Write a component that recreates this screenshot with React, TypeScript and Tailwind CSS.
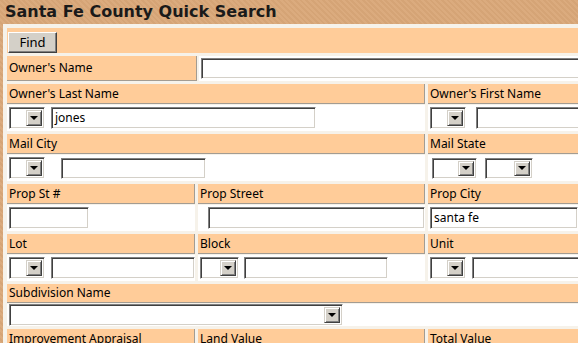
import React from "react";

const font = "font-['Noto_Sans',sans-serif]";

function Box(props: { w: number; h?: number; value?: string }) {
  return (
    <div
      className="flex items-center bg-white border border-t-[#808080] border-l-[#808080] border-r-white border-b-white shadow-[inset_1px_1px_0_#404040,inset_-1px_-1px_0_#d4d0c8] pl-[3px] text-[12px] text-black overflow-hidden"
      style={{ width: props.w, height: props.h ?? 22 }}
    >
      {props.value}
    </div>
  );
}

function Select(props: { w: number; h?: number }) {
  return (
    <div
      className="flex justify-end items-stretch bg-white border border-t-[#808080] border-l-[#808080] border-r-white border-b-white shadow-[inset_1px_1px_0_#404040,inset_-1px_-1px_0_#d4d0c8] p-[2px]"
      style={{ width: props.w, height: props.h ?? 22 }}
    >
      <div className="w-[16px] flex items-center justify-center bg-[#d4d0c8] border border-t-[#d4d0c8] border-l-[#d4d0c8] border-r-[#404040] border-b-[#404040] shadow-[inset_1px_1px_0_#fff,inset_-1px_-1px_0_#808080]">
        <div className="w-0 h-0 border-l-[4px] border-r-[4px] border-t-[4px] border-l-transparent border-r-transparent border-t-black" />
      </div>
    </div>
  );
}

function Label(props: { text: string; w?: number; h?: number }) {
  return (
    <div
      className={`bg-[#ffcc99] flex items-center pl-[2px] text-[12px] text-black border-b border-r border-b-[#a39c92] border-r-[#a39c92] ${props.w ? "" : "flex-1"}`}
      style={{ width: props.w, height: props.h ?? 20 }}
    >
      {props.text}
    </div>
  );
}

function Cell(props: { w?: number; children?: React.ReactNode; className?: string }) {
  return (
    <div
      className={`bg-white flex items-center h-[26px] pl-[2px] ${props.w ? "" : "flex-1"} ${props.className ?? "gap-[6px]"}`}
      style={{ width: props.w }}
    >
      {props.children}
    </div>
  );
}

export default function App() {
  return (
    <div
      className={`w-[578px] h-[343px] overflow-hidden bg-[#d8a87a] bg-[repeating-linear-gradient(45deg,#dbab7e_0px,#dbab7e_2px,#d5a476_2px,#d5a476_4px)] ${font}`}
    >
      <div className="h-[24px] pl-[5px] flex items-center text-[16px] font-bold text-[#1a1a1a] font-['DejaVu_Sans',sans-serif]">
        Santa Fe County Quick Search
      </div>
      <div className="ml-[3px] w-[700px] bg-[#f6f2ea] pt-[4px] pl-[4px] flex flex-col gap-[3px]">
        <div className="bg-[#ffcc99] h-[25px] pl-[1px] pt-[1px]">
          <button className="w-[49px] h-[21px] bg-[#d4d0c8] border border-t-white border-l-white border-r-[#404040] border-b-[#404040] shadow-[inset_-1px_-1px_0_#808080] text-[13px] text-black">
            Find
          </button>
        </div>

        <div className="flex gap-[2px] h-[25px]">
          <Label text="Owner's Name" w={190} h={25} />
          <div className="flex-1 bg-white flex items-center pl-[2px]">
            <Box w={500} h={21} />
          </div>
        </div>

        <div className="flex flex-col gap-[1px]">
          <div className="flex gap-[3px]">
            <Label text="Owner's Last Name" w={418} />
            <Label text="Owner's First Name" />
          </div>
          <div className="flex gap-[3px]">
            <Cell w={418}>
              <Select w={36} />
              <Box w={265} value="jones" />
            </Cell>
            <Cell className="gap-[10px]">
              <Select w={36} />
              <Box w={200} />
            </Cell>
          </div>
        </div>

        <div className="flex flex-col gap-[1px]">
          <div className="flex gap-[3px]">
            <Label text="Mail City" w={418} />
            <Label text="Mail State" />
          </div>
          <div className="flex gap-[3px]">
            <Cell w={418} className="gap-[16px]">
              <Select w={36} />
              <Box w={145} h={21} />
            </Cell>
            <Cell className="pl-[4px] gap-[8px]">
              <Select w={45} h={21} />
              <Select w={48} h={21} />
            </Cell>
          </div>
        </div>

        <div className="flex flex-col gap-[1px]">
          <div className="flex gap-[3px]">
            <Label text="Prop St #" w={188} />
            <Label text="Prop Street" w={227} />
            <Label text="Prop City" />
          </div>
          <div className="flex gap-[3px]">
            <Cell w={188}>
              <Box w={80} />
            </Cell>
            <Cell w={227} className="pl-[10px]">
              <Box w={218} />
            </Cell>
            <Cell>
              <Box w={148} value="santa fe" />
            </Cell>
          </div>
        </div>

        <div className="flex flex-col gap-[1px]">
          <div className="flex gap-[3px]">
            <Label text="Lot" w={188} />
            <Label text="Block" w={227} />
            <Label text="Unit" />
          </div>
          <div className="flex gap-[3px]">
            <Cell w={188}>
              <Select w={36} />
              <Box w={145} />
            </Cell>
            <Cell w={227} className="gap-[5px]">
              <Select w={39} />
              <Box w={144} />
            </Cell>
            <Cell>
              <Select w={36} />
              <Box w={200} />
            </Cell>
          </div>
        </div>

        <div className="flex flex-col gap-[1px]">
          <Label text="Subdivision Name" />
          <Cell>
            <Select w={334} />
          </Cell>
        </div>

        <div className="flex gap-[3px]">
          <Label text="Improvement Appraisal" w={188} />
          <Label text="Land Value" w={227} />
          <Label text="Total Value" />
        </div>
      </div>
    </div>
  );
}
